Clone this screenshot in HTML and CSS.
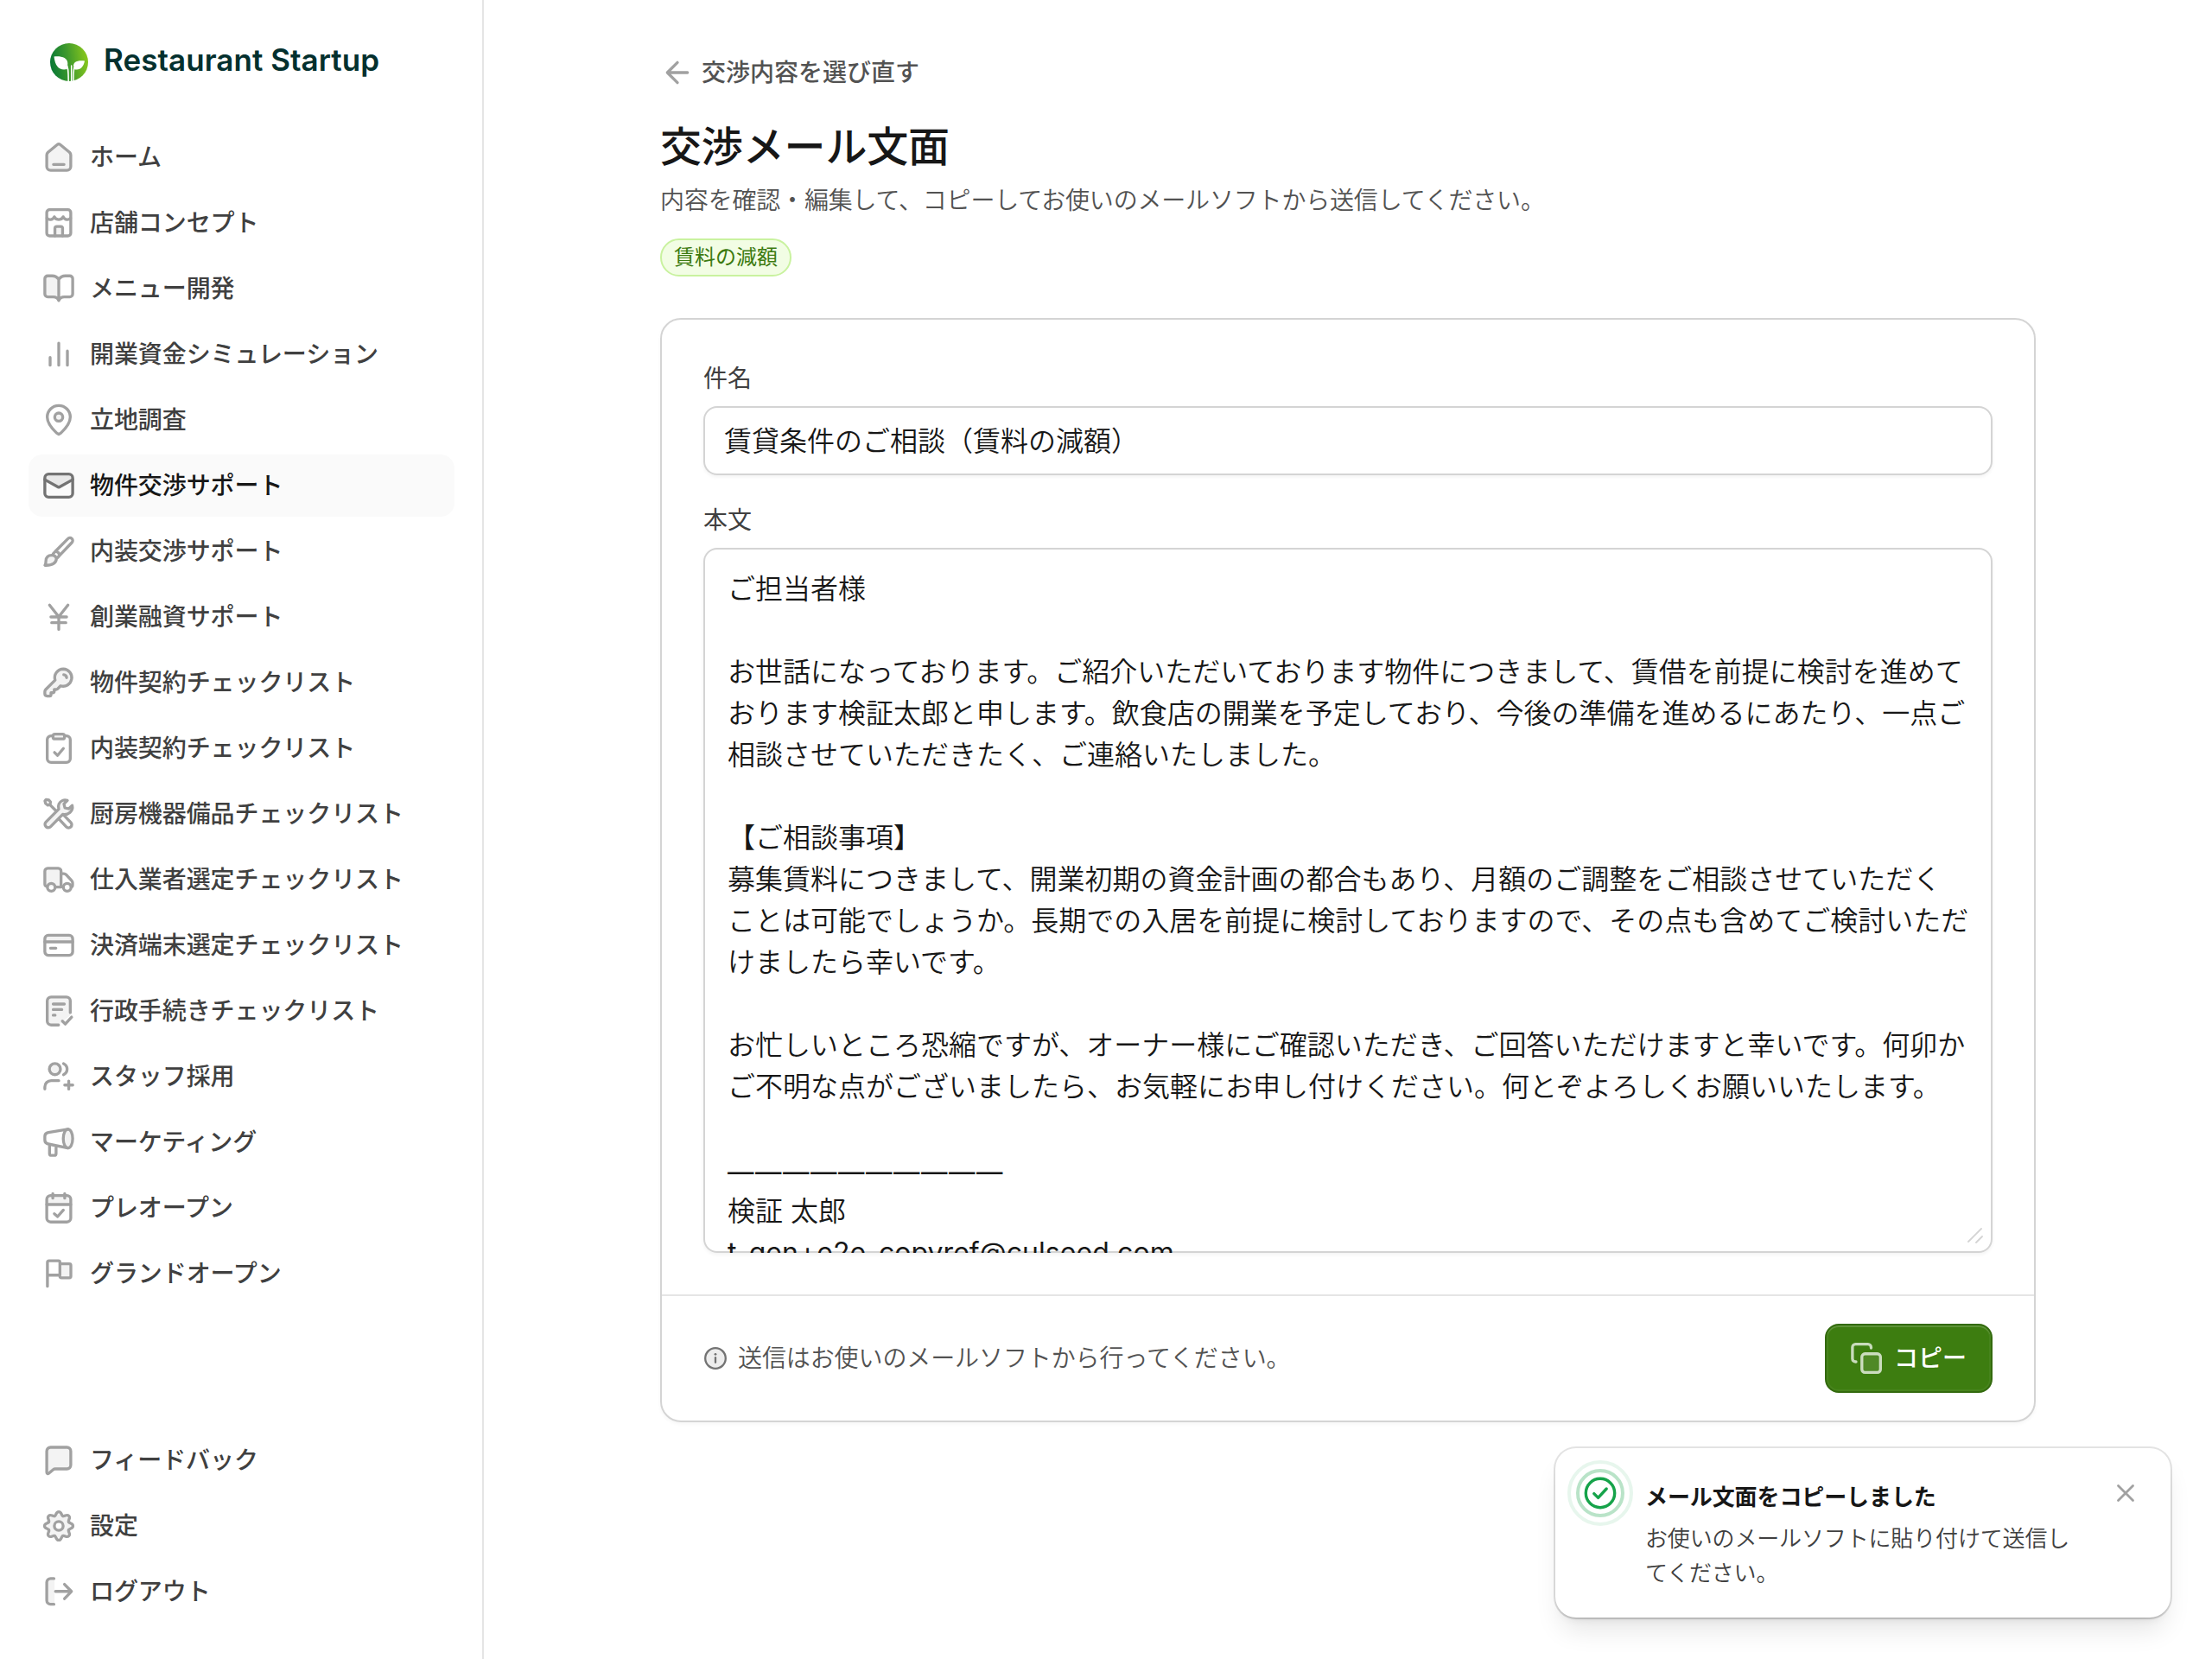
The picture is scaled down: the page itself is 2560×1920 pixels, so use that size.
FILE: index.html
```html
<!DOCTYPE html>
<html lang="ja">
<head>
<meta charset="utf-8">
<title>交渉メール文面 | Restaurant Startup</title>
<link rel="stylesheet" href="styles.css">
</head>
<body>
<div class="app">
  <aside class="sidebar">
    <div class="brand">
      <svg class="brand-mark" viewBox="0 0 44 44">
        <defs><linearGradient id="leaf" x1="0" y1="0.35" x2="1" y2="0.2"><stop offset="0" stop-color="#0b7a35"/><stop offset=".45" stop-color="#3f9a2c"/><stop offset="1" stop-color="#8fcb1c"/></linearGradient></defs>
        <circle cx="22" cy="22" r="22" fill="url(#leaf)"/>
        <path fill="#fff" d="M4.5 15.5c9-.8 15.500 1.500 15.800 7.500.1 1.800-.3 3-.5 3.600-.3-1-1-2-2-2.600 1.200 1.800 1.900 3.500 2.100 6C11 32 6 27.500 4.500 15.500zM40 20.500c-1.500 7.500-5.500 11.500-12.600 9.400.2-2.200.9-3.700 1.900-4.900-1 .6-1.700 1.400-2.100 2.300-.9-5.300 3.800-7.800 12.800-6.800z"/>
        <path fill="none" stroke="#fff" stroke-width="1.500" d="M18.200 23.500c2.600 3 3 8 3 20.500M24.700 26v18M29 24.800c-2.200 3-2 8-2 19"/>
      </svg>
      <span class="brand-name">Restaurant Startup</span>
    </div>
    <nav class="nav">
      <a class="item"><svg class="icon" viewBox="0 0 18 18"><path class="tint" d="M3.400 6.400l4.900-4a1.100 1.100 0 0 1 1.400 0l4.900 4c.4.4.65.9.65 1.400v6c0 1.100-.9 2-2 2h-8.500c-1.100 0-2-.9-2-2v-6c0-.5.25-1 .65-1.400z"/><path d="M3.400 6.400l4.900-4a1.100 1.100 0 0 1 1.400 0l4.900 4c.4.4.65.9.65 1.400v6c0 1.100-.9 2-2 2h-8.500c-1.100 0-2-.9-2-2v-6c0-.5.25-1 .65-1.400zM6.250 12.750h5.500"/></svg>ホーム</a>
      <a class="item"><svg class="icon" viewBox="0 0 18 18"><path class="tint" d="M7 15.750v-3.900a1 1 0 0 1 1-1h2a1 1 0 0 1 1 1v3.900z"/><rect x="2.750" y="2.100" width="12.500" height="13.650" rx="1.500"/><path d="M2.900 6.500c.9 1.200 3.100 1 3.800-.7.700 1.900 3.900 1.900 4.600 0 .7 1.700 2.900 1.900 3.800.7M7 15.750v-3.900a1 1 0 0 1 1-1h2a1 1 0 0 1 1 1v3.900"/></svg>店舗コンセプト</a>
      <a class="item"><svg class="icon" viewBox="0 0 18 18"><path class="tint" d="M9 4.200C8.200 3 7 2.350 5.500 2.350H3.250a1.500 1.500 0 0 0-1.500 1.500v8c0 .8.7 1.500 1.500 1.500h2.900c1.400 0 2.400.6 2.850 1.600z"/><path d="M9 4.200C8.200 3 7 2.350 5.500 2.350H3.250a1.500 1.500 0 0 0-1.500 1.500v8c0 .8.7 1.500 1.500 1.500h2.900c1.400 0 2.400.8 2.850 1.900.45-1.100 1.450-1.900 2.850-1.900h2.900c.8 0 1.500-.7 1.500-1.500v-8c0-.8-.7-1.500-1.500-1.500H12.500C11 2.350 9.800 3 9 4.200zv10.800"/></svg>メニュー開発</a>
      <a class="item"><svg class="icon" viewBox="0 0 18 18"><path d="M4.500 10.700v4M9 3.200v11.500M13.500 7.300v7.400"/></svg>開業資金シミュレーション</a>
      <a class="item"><svg class="icon" viewBox="0 0 18 18"><circle class="tint" cx="9" cy="7.500" r="2.100"/><path d="M15 7.500c0 3-2.600 6.100-4.900 8.300L9 16.500l-1.100-.7C5.600 13.600 3 10.500 3 7.500a6 6 0 0 1 12 0z"/><circle cx="9" cy="7.500" r="2.100"/></svg>立地調査</a>
      <a class="item active"><svg class="icon" viewBox="0 0 18 18"><path class="tint" d="M1.750 6V5a2 2 0 0 1 2-2h10.500a2 2 0 0 1 2 2v1L9 9.900z"/><rect x="1.750" y="3" width="14.500" height="12" rx="2"/><path d="M1.750 5.900l6.770 3.740a1 1 0 0 0 .96 0l6.770-3.740"/></svg>物件交渉サポート</a>
      <a class="item"><svg class="icon" viewBox="0 0 18 18"><path class="tint" d="M5.800 11.100c-2.300-.3-3.600 1.100-3.500 3 0 .9-.1 1.600-.5 2.200 2.800.1 5.700-.2 6-3.400-.2-1-.9-1.700-2-1.800z"/><path d="M5.800 11.100c-2.300-.3-3.600 1.100-3.500 3 0 .9-.1 1.600-.5 2.200 2.800.1 5.700-.2 6-3.400-.2-1-.9-1.700-2-1.800zM5.800 11.100c.1-.6.8-1.500 1.600-2.200l6.300-6.400c.6-.65 1.500-.7 2.100-.1.650.6.600 1.500 0 2.100l-6.400 6.700c-.5.600-1.100 1.200-1.600 1.700M7.400 8.900c1.200.3 1.900 1.200 2 2.200"/></svg>内装交渉サポート</a>
      <a class="item"><svg class="icon" viewBox="0 0 18 18"><path d="M4.200 2.800L9 8.900l4.800-6.100M9 8.900v6.600M4.900 9h8.200M5.300 12h7.400"/></svg>創業融資サポート</a>
      <a class="item"><svg class="icon" viewBox="0 0 18 18"><path class="tint" d="M11.400 1.900a4.500 4.500 0 0 0-4.300 5.800L2.200 12.600c-.3.3-.45.7-.45 1.100v1.200c0 .6.5 1.100 1.200 1.100h1.300c.4 0 .7-.3.7-.7v-1h.9c.5 0 .8-.3.8-.8v-.9h.9c.3 0 .6-.1.8-.3l1.600-1.600A4.500 4.500 0 1 0 11.400 1.900z"/><path d="M11.400 1.900a4.500 4.500 0 0 0-4.300 5.800L2.200 12.600c-.3.3-.45.7-.45 1.100v1.200c0 .6.5 1.100 1.200 1.100h1.300c.4 0 .7-.3.7-.7v-1h.9c.5 0 .8-.3.8-.8v-.9h.9c.3 0 .6-.1.8-.3l1.600-1.600A4.500 4.500 0 1 0 11.400 1.900zM11.600 4.900c.9.1 1.400.7 1.500 1.500"/></svg>物件契約チェックリスト</a>
      <a class="item"><svg class="icon" viewBox="0 0 18 18"><rect class="tint" x="6" y="1.600" width="6" height="2.500" rx="1"/><path d="M6 2.500H5a2 2 0 0 0-2 2v9.900a2 2 0 0 0 2 2h8a2 2 0 0 0 2-2V4.500a2 2 0 0 0-2-2h-1M6.800 11.200l1.600 1.500 3-3.600"/><rect x="6" y="1.600" width="6" height="2.500" rx="1"/></svg>内装契約チェックリスト</a>
      <a class="item"><svg class="icon" viewBox="0 0 18 18"><path class="tint" d="M16 5.100l-1.800 1.700-2-.5-.5-2 1.800-1.800c-1.700-.6-3.600 0-4.400 1.800-.4.9-.4 1.800-.1 2.700L2.300 13.200a1.700 1.700 0 0 0 2.500 2.400l6.300-6.400c2.800.6 5.600-1.100 4.900-4.100z"/><path d="M1.800 2.300l.6-.8 1.500.3.800.9-.2 1.400-1.200.3-1.100-.8zM4.200 4l3.200 3.200M16 4.600l-1.800 1.700-2-.5-.5-2 1.800-1.800c-1.700-.6-3.600 0-4.400 1.800-.4.9-.4 1.800-.1 2.700L2.300 13.200a1.700 1.700 0 0 0 2.500 2.400l6.300-6.400c2.800.6 5.600-1.600 4.900-4.600zM9 11.500l3.900 4.200a1.600 1.600 0 0 0 2.400-2.300l-3.900-4"/></svg>厨房機器備品チェックリスト</a>
      <a class="item"><svg class="icon" viewBox="0 0 18 18"><path class="tint" d="M3 12.600c-.65 0-1.250-.5-1.250-1.150V4.400c0-.7.6-1.300 1.300-1.300H8.900c.7 0 1.300.6 1.300 1.300v8.300z"/><path d="M3 12.600c-.65 0-1.250-.5-1.250-1.150V4.600c0-.8.6-1.500 1.500-1.500H8.700c.9 0 1.500.7 1.500 1.500v8.300H7.300M10.200 5.900h1.500c.4 0 .8.2 1.100.5l2.900 3.100c.3.300.5.700.5 1.200v1.200c0 .4-.2.800-.7.900"/><circle cx="5.100" cy="13" r="2"/><circle cx="13.400" cy="13" r="2"/></svg>仕入業者選定チェックリスト</a>
      <a class="item"><svg class="icon" viewBox="0 0 18 18"><path class="tint" d="M1.750 7.200V5.800a2 2 0 0 1 2-2h10.500a2 2 0 0 1 2 2v1.400z"/><rect x="1.750" y="3.800" width="14.500" height="10.400" rx="1.800"/><path d="M1.750 7.200h14.500M4.700 10.500h2.800"/></svg>決済端末選定チェックリスト</a>
      <a class="item"><svg class="icon" viewBox="0 0 18 18"><path class="tint" d="M9 16.300H5a2 2 0 0 1-2-2V3.750a2 2 0 0 1 2-2h8a2 2 0 0 1 2 2v7.500z"/><path d="M8.900 16.300H5a2 2 0 0 1-2-2V3.750a2 2 0 0 1 2-2h8a2 2 0 0 1 2 2v6.100M6.100 5.400h5.800M6.100 8.300h4.500M6.100 11.200h1M10.900 14.300l1.500 1.500 3.300-3.600"/></svg>行政手続きチェックリスト</a>
      <a class="item"><svg class="icon" viewBox="0 0 18 18"><circle class="tint" cx="7" cy="5.100" r="2.900"/><circle cx="7" cy="5.100" r="2.900"/><path d="M11.500 2.200a3.200 3.200 0 0 1 0 5.800M1.750 15.400v-1c0-1.900 1.400-3.300 3.300-3.300H9M14.200 11.300v4.200M12.100 13.400h4.200"/></svg>スタッフ採用</a>
      <a class="item"><svg class="icon" viewBox="0 0 18 18"><ellipse class="tint" cx="13.800" cy="7.100" rx="2.450" ry="4.900"/><ellipse cx="13.800" cy="7.100" rx="2.450" ry="4.900"/><path d="M13.800 2.200L3.600 3.900c-1.100.2-1.850 1-1.850 2v2c0 1 .7 1.800 1.800 2l10.250 2.100M4.200 10.200v4.600c0 .6.400 1 1 1h1.400c.6 0 1-.4 1-1v-3.900"/></svg>マーケティング</a>
      <a class="item"><svg class="icon" viewBox="0 0 18 18"><path class="tint" d="M2.750 7.200V4.500a2 2 0 0 1 2-2h8.500a2 2 0 0 1 2 2v2.700z"/><rect x="2.750" y="2.500" width="12.500" height="13.800" rx="2"/><path d="M2.750 7.200h12.500M5.900 1.500v2.400M12.100 1.500v2.400M6.700 12l1.700 1.500 3-3.400"/></svg>プレオープン</a>
      <a class="item"><svg class="icon" viewBox="0 0 18 18"><path class="tint" d="M9.600 3.900h4.900c.5 0 .8.3.8.8v5.700c0 .5-.3.800-.8.800h-4.100c-.5 0-.8-.3-.8-.8z"/><path d="M3.100 15.600V3.200c0-.5.4-.9.900-.9h4.800c.5 0 .8.3.8.8v6.700H3.100M9.600 3.900h4.900c.5 0 .8.3.8.8v5.700c0 .5-.3.800-.8.800h-4.100c-.5 0-.8-.3-.8-.8"/></svg>グランドオープン</a>
    </nav>
    <nav class="nav nav-foot">
      <a class="item"><svg class="icon" viewBox="0 0 18 18"><path class="tint" d="M13.250 2.250h-8.500a2 2 0 0 0-2 2v11.100c0 .6.600.8 1 .5l2.400-2c.3-.25.6-.35 1-.35h6.100a2 2 0 0 0 2-2V4.250a2 2 0 0 0-2-2z"/><path d="M13.250 2.250h-8.500a2 2 0 0 0-2 2v11.100c0 .6.600.8 1 .5l2.400-2c.3-.25.6-.35 1-.35h6.100a2 2 0 0 0 2-2V4.250a2 2 0 0 0-2-2z"/></svg>フィードバック</a>
      <a class="item"><svg class="icon" viewBox="0 0 18 18"><circle class="tint" cx="9" cy="9" r="6"/><path id="lobe" d="M6.860 3.830C7.900 3.400 7.400 1.600 9 1.600s1.100 1.800 2.140 2.230"/><use href="#lobe" transform="rotate(45 9 9)"/><use href="#lobe" transform="rotate(90 9 9)"/><use href="#lobe" transform="rotate(135 9 9)"/><use href="#lobe" transform="rotate(180 9 9)"/><use href="#lobe" transform="rotate(225 9 9)"/><use href="#lobe" transform="rotate(270 9 9)"/><use href="#lobe" transform="rotate(315 9 9)"/><circle class="hole" cx="9" cy="9" r="2.300"/></svg>設定</a>
      <a class="item"><svg class="icon" viewBox="0 0 18 18"><path class="tint" d="M6.800 2.200H4.750a2 2 0 0 0-2 2v9.400a2 2 0 0 0 2 2H6.800z"/><path d="M6.500 2.200H4.750a2 2 0 0 0-2 2v9.400a2 2 0 0 0 2 2H6.500M7.300 8.900h8.300M12 5.200l3.600 3.700-3.600 3.800"/></svg>ログアウト</a>
    </nav>
  </aside>

  <main class="main">
    <div class="content">
      <a class="back"><svg class="back-icon" viewBox="0 0 24 24"><path d="M19 12H5M12 19l-7-7 7-7"/></svg>交渉内容を選び直す</a>
      <h1 class="title">交渉メール文面</h1>
      <p class="lead">内容を確認・編集して、コピーしてお使いのメールソフトから送信してください。</p>
      <span class="badge">賃料の減額</span>

      <section class="card">
        <div class="card-body">
          <label class="label" for="subject">件名</label>
          <input class="field" id="subject" value="賃貸条件のご相談（賃料の減額）">
          <span class="label label-body">本文</span>
          <div class="area-wrap">
            <div class="area" role="textbox" aria-multiline="true">ご担当者様

お世話になっております。ご紹介いただいております物件につきまして、賃借を前提に検討を進めて
おります検証太郎と申します。飲食店の開業を予定しており、今後の準備を進めるにあたり、一点ご
相談させていただきたく、ご連絡いたしました。

【ご相談事項】
募集賃料につきまして、開業初期の資金計画の都合もあり、月額のご調整をご相談させていただく
ことは可能でしょうか。長期での入居を前提に検討しておりますので、その点も含めてご検討いただ
けましたら幸いです。

お忙しいところ恐縮ですが、オーナー様にご確認いただき、ご回答いただけますと幸いです。何卯か
ご不明な点がございましたら、お気軽にお申し付けください。何とぞよろしくお願いいたします。

<span class="rule">——————————</span>
検証 太郎
<span class="mail">t-gen+e2e-copyref@culseed.com</span></div>
            <svg class="grip" viewBox="0 0 20 20"><path d="M2 17L17 2M11 18l7-7"/></svg>
          </div>
        </div>
        <div class="card-foot">
          <p class="note"><svg class="note-icon" viewBox="0 0 28 28"><circle class="tint" cx="14" cy="14" r="11.800"/><circle cx="14" cy="14" r="11.800"/><path d="M14 13.200v5.600"/><circle class="dot" cx="14" cy="9.300" r="1.400"/></svg>送信はお使いのメールソフトから行ってください。</p>
          <button class="copy"><svg class="copy-icon" viewBox="0 0 18 18"><rect class="tint" x="6.650" y="6.650" width="9.700" height="9.700" rx="1.600"/><rect x="6.650" y="6.650" width="9.700" height="9.700" rx="1.600"/><path d="M3.600 10.800h-.2c-.9 0-1.650-.7-1.650-1.600V3.250c0-.9.7-1.600 1.600-1.600h6.500c.9 0 1.600.7 1.600 1.600v.4"/></svg>コピー</button>
        </div>
      </section>
    </div>
  </main>

  <div class="toast">
    <svg class="toast-icon" viewBox="0 0 76 76"><circle class="halo" cx="38" cy="38" r="36"/><circle class="ring" cx="38" cy="38" r="26"/><circle cx="38" cy="38" r="16.700"/><path d="M30.800 38.600l4.800 4.800 9.600-10.400"/></svg>
    <div class="toast-text">
      <p class="toast-title">メール文面をコピーしました</p>
      <p class="toast-desc">お使いのメールソフトに貼り付けて送信し<br>てください。</p>
    </div>
    <svg class="toast-close" viewBox="0 0 24 24"><path d="M3.500 3.500l17 17M20.500 3.500l-17 17"/></svg>
  </div>
</div>
</body>
</html>
```
FILE: styles.css
```css
* { box-sizing: border-box; }

body {
  margin: 0;
  background: #fff;
  color: #171717;
  font-family: Inter, "Noto Sans CJK JP", sans-serif;
  font-size: 28px;
  font-weight: 350;
}

h1, p { margin: 0; }

svg { flex: none; fill: none; stroke: currentColor; stroke-linecap: round; stroke-linejoin: round; }
.tint { fill: currentColor; fill-opacity: .13; stroke: none; }

.app { display: flex; width: 2560px; height: 1920px; overflow: hidden; }

/* Sidebar */
.sidebar {
  display: flex;
  flex-direction: column;
  width: 560px;
  padding: 50px 32px 42px 33px;
  border-right: 2px solid #e5e5e5;
}

.brand { display: flex; align-items: center; gap: 18px; height: 44px; margin-bottom: 52px; padding-left: 25px; }
.brand-mark { width: 44px; height: 44px; stroke: none; }
.brand-name {
  margin-top: -6px;
  color: #04302e;
  font: 560 35px/44px Inter, sans-serif;
  letter-spacing: .05px;
  white-space: nowrap;
}

.nav { display: flex; flex-direction: column; gap: 4px; }
.nav-foot { margin-top: auto; }
.item {
  display: flex;
  align-items: center;
  gap: 16px;
  height: 72px;
  padding: 0 16px 4px 15px;
  border-radius: 16px;
  color: #404040;
  font-weight: 500;
  letter-spacing: -.08px;
  white-space: nowrap;
}
.item.active { background: #fafafa; color: #171717; }
.icon { width: 40px; height: 40px; margin-top: 4px; color: #a1a1a1; stroke-width: 1.5; }
.active .icon { color: #737373; }
.hole { fill: #fff; }

/* Main column */
.main { display: flex; flex: 1; justify-content: center; padding-top: 62px; }
.content { display: flex; flex-direction: column; align-items: flex-start; width: 1592px; }

.back { display: flex; align-items: center; gap: 8px; height: 44px; padding-bottom: 4px; color: #525252; font-weight: 500; }
.back-icon { width: 40px; height: 40px; margin-top: 4px; color: #a1a1a1; stroke-width: 2; }

.title { margin-top: 32px; font-size: 48px; font-weight: 500; line-height: 64px; letter-spacing: -.15px; }
.lead { margin-top: 10px; color: #525252; line-height: 40px; letter-spacing: -.18px; }
.badge {
  display: flex;
  align-items: center;
  height: 44px;
  margin-top: 24px;
  padding: 0 14px 5px;
  border: 2px solid #c9f29f;
  border-radius: 22px;
  background: #f2fde4;
  color: #3c7a10;
  font-size: 24px;
  font-weight: 400;
}

.card {
  width: 100%;
  margin-top: 48px;
  border: 2px solid #d4d4d4;
  border-radius: 24px;
  box-shadow: 0 2px 4px rgba(0, 0, 0, .04);
}
.card-body { display: flex; flex-direction: column; padding: 48px 48px 48px; }
.label { color: #404040; line-height: 40px; margin-bottom: 12px; font-weight: 400; }
.label-body { margin: 32px 0 12px; }

.field, .area {
  display: block;
  width: 100%;
  margin: 0;
  border: 0;
  border-radius: 16px;
  background: transparent;
  box-shadow: inset 0 0 0 2px #d4d4d4, 0 2px 4px rgba(0, 0, 0, .05);
  color: #171717;
  font: 350 32px/48px Inter, "Noto Sans CJK JP", sans-serif;
}
.field { height: 80px; padding: 0 24px 5px; }
.area-wrap { position: relative; }
.area {
  height: 816px;
  padding: 24px 0 0 28px;
  overflow: hidden;
  white-space: pre;
}
/* Signature separator: each dash stands slightly apart from the next */
.rule { display: inline-block; height: 48px; padding-top: 2px; font-size: 30.4px; font-weight: 400; letter-spacing: 1.6px; vertical-align: top; }
.mail { font-weight: 400; letter-spacing: .05px; }
.grip { position: absolute; right: 10px; bottom: 10px; width: 20px; height: 20px; color: #d4d4d4; stroke-width: 1.8; }

.card-foot {
  display: flex;
  align-items: center;
  justify-content: space-between;
  height: 146px;
  padding: 0 48px;
  border-top: 2px solid #e5e5e5;
}
.note { display: flex; align-items: center; gap: 12px; padding-bottom: 4px; color: #525252; letter-spacing: -.1px; }
.note-icon { width: 28px; height: 28px; margin-top: 4px; color: #737373; stroke-width: 2.3; }
.dot { fill: currentColor; stroke: none; }

.copy {
  display: flex;
  align-items: center;
  gap: 12px;
  width: 194px;
  height: 80px;
  padding: 0 0 0 26px;
  border: 2px solid #336a0e;
  border-radius: 16px;
  background: #3d7d10;
  box-shadow: inset 0 2px 0 rgba(255, 255, 255, .12), inset 0 0 0 2px rgba(255, 255, 255, .05);
  color: #fff;
  font: 500 28px/40px Inter, "Noto Sans CJK JP", sans-serif;
}
.copy-icon { width: 40px; height: 40px; color: rgba(255, 255, 255, .72); stroke-width: 1.5; }

/* Toast floats over the page corner */
.toast {
  position: absolute;
  top: 1676px;
  left: 1800px;
  display: flex;
  width: 712px;
  height: 196px;
  padding: 14px;
  border-radius: 24px;
  background: #fff;
  box-shadow: 0 0 0 2px rgba(0, 0, 0, .11), 0 2px 2px rgba(0, 0, 0, .08), 0 20px 30px -6px rgba(0, 0, 0, .1), 0 8px 12px -8px rgba(0, 0, 0, .1);
}
.toast-icon { width: 76px; height: 76px; color: #16a34a; stroke-width: 3.4; }
.toast-icon .ring { stroke-width: 4; stroke-opacity: .3; }
.toast-icon .halo { stroke-width: 4; stroke-opacity: .1; }
.toast-text { flex: 1; padding: 23px 0 0 14px; font-size: 26px; line-height: 40px; white-space: nowrap; }
.toast-title { font-weight: 700; letter-spacing: -.1px; }
.toast-desc { margin-top: 8px; color: #404040; letter-spacing: -.15px; }
.toast-close { width: 24px; height: 24px; margin: 26px 26px 0 0; color: #a1a1a1; stroke-width: 2.8; }
```
